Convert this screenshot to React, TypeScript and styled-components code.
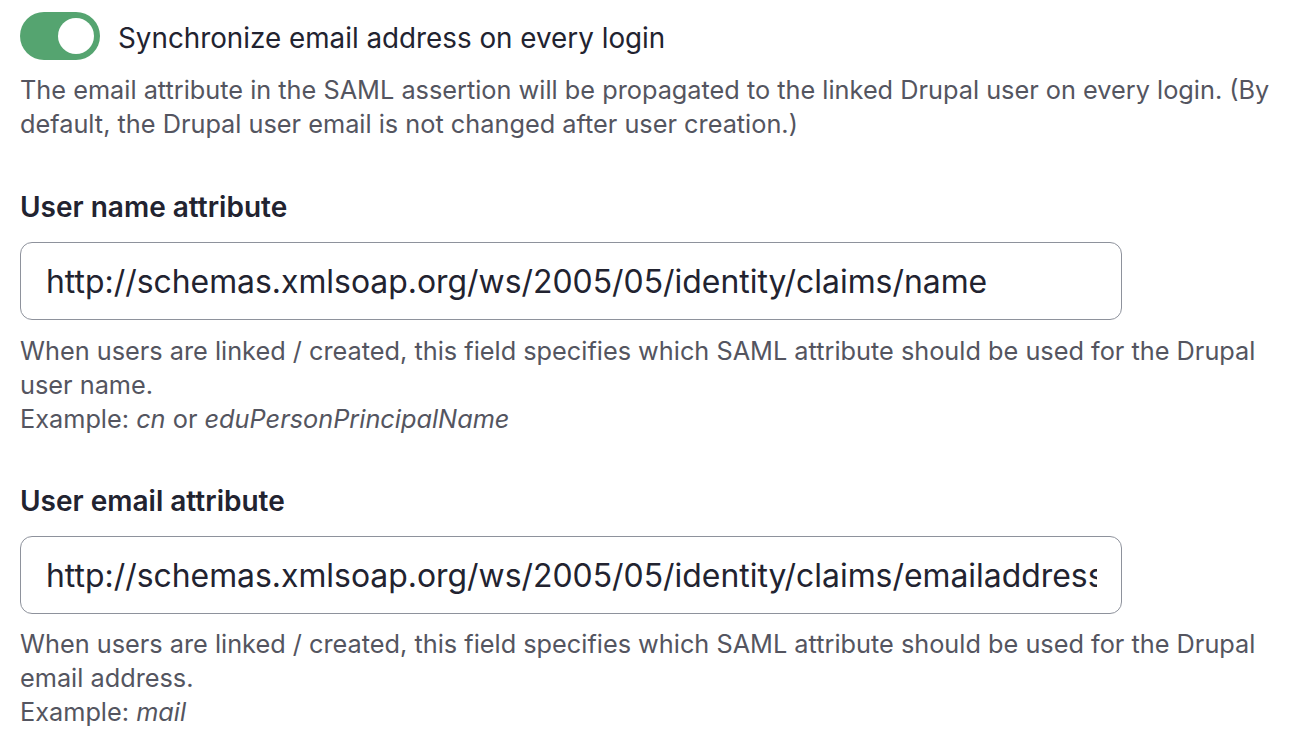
import React from "react";
import styled, { createGlobalStyle } from "styled-components";

const GlobalStyle = createGlobalStyle`
  body {
    margin: 0;
    background: #ffffff;
    font-family: Inter, "Noto Sans", sans-serif;
    color: #222330;
  }
`;

const Page = styled.div`
  padding: 12px 20px 0;
  display: flex;
  flex-direction: column;
`;

const FormItem = styled.div<{ $top?: number }>`
  display: flex;
  flex-direction: column;
  margin-top: ${(p) => p.$top ?? 0}px;
`;

const ToggleRow = styled.label`
  display: flex;
  align-items: center;
  gap: 18px;
  height: 48px;
`;

const Switch = styled.span<{ $on: boolean }>`
  position: relative;
  flex: none;
  width: 80px;
  height: 48px;
  border-radius: 24px;
  background: ${(p) => (p.$on ? "#55a470" : "#8e929c")};
`;

const Knob = styled.span<{ $on: boolean }>`
  position: absolute;
  top: 6px;
  left: ${(p) => (p.$on ? "38px" : "6px")};
  width: 36px;
  height: 36px;
  border-radius: 50%;
  background: #ffffff;
`;

const ToggleLabel = styled.span`
  padding-top: 3px;
  font-size: 27.8px;
  color: #222330;
`;

const Label = styled.div`
  font-size: 28px;
  font-weight: 600;
  line-height: 34px;
  color: #222330;
`;

const Input = styled.input`
  margin-top: 18px;
  box-sizing: border-box;
  width: 1102px;
  height: 78px;
  padding: 0 24px 0 25px;
  border: 1.5px solid #8e929c;
  border-radius: 12px;
  font-family: Inter, "Noto Sans", sans-serif;
  font-size: 31.9px;
  color: #222330;
  background: #ffffff;
  outline: none;
`;

const Description = styled.div<{ $top: number }>`
  margin-top: ${(p) => p.$top}px;
  font-size: 25.3px;
  line-height: 34px;
  color: #545560;
  max-width: 1280px;
  em {
    font-style: italic;
  }
`;

export default function App() {
  return (
    <>
      <GlobalStyle />
      <Page>
        <FormItem>
          <ToggleRow>
            <Switch $on>
              <Knob $on />
            </Switch>
            <ToggleLabel>Synchronize email address on every login</ToggleLabel>
          </ToggleRow>
          <Description $top={13}>
            The email attribute in the SAML assertion will be propagated to the
            linked Drupal user on every login. (By default, the Drupal user
            email is not changed after user creation.)
          </Description>
        </FormItem>

        <FormItem $top={49}>
          <Label>User name attribute</Label>
          <Input
            readOnly
            value="http://schemas.xmlsoap.org/ws/2005/05/identity/claims/name"
          />
          <Description $top={14}>
            When users are linked / created, this field specifies which SAML
            attribute should be used for the Drupal user name.
            <br />
            Example: <em>cn</em> or <em>eduPersonPrincipalName</em>
          </Description>
        </FormItem>

        <FormItem $top={48}>
          <Label>User email attribute</Label>
          <Input
            readOnly
            value="http://schemas.xmlsoap.org/ws/2005/05/identity/claims/emailaddress"
          />
          <Description $top={13}>
            When users are linked / created, this field specifies which SAML
            attribute should be used for the Drupal email address.
            <br />
            Example: <em>mail</em>
          </Description>
        </FormItem>
      </Page>
    </>
  );
}
